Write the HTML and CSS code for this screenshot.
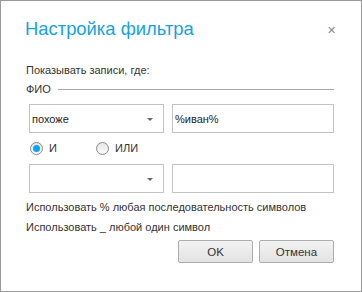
FILE: index.html
```html
<!DOCTYPE html>
<html lang="ru">
<head>
  <meta charset="UTF-8" />
  <title>Настройка фильтра</title>
  <link rel="stylesheet" href="styles.css">
</head>
<body>
  <div class="dialog">
    <div class="dialog-head">
      <h1 class="dialog-title">Настройка фильтра</h1>
      <span class="close">&#x2715;</span>
    </div>

    <div class="hint">Показывать записи, где:</div>

    <div class="group-title">
      <span>ФИО</span>
      <span class="rule"></span>
    </div>

    <div class="row">
      <div class="combo"><span>похоже</span><i class="arrow"></i></div>
      <div class="edit">%иван%</div>
    </div>

    <div class="radios">
      <label class="radio checked"><span class="dot"></span>И</label>
      <label class="radio"><span class="dot"></span>ИЛИ</label>
    </div>

    <div class="row">
      <div class="combo"><span></span><i class="arrow"></i></div>
      <div class="edit"></div>
    </div>

    <div class="note">Использовать % любая последовательность символов</div>
    <div class="note">Использовать _ любой один символ</div>

    <div class="buttons">
      <button class="btn">OK</button>
      <button class="btn">Отмена</button>
    </div>
  </div>
</body>
</html>
```

FILE: styles.css
```css
* {
  box-sizing: border-box;
}

html, body {
  margin: 0;
  padding: 0;
  background: #fff;
}

/* окно диалога */
.dialog {
  width: 362px;
  height: 292px;
  border: 1px solid #9a9a9a;
  background: #fff;
  padding: 0 27px 0 25px;
  font-family: "Liberation Sans", Arial, sans-serif;
  font-size: 11px;
  color: #333;
  display: flex;
  flex-direction: column;
}

.dialog-head {
  display: flex;
  justify-content: space-between;
  align-items: center;
  height: 58px;
  padding-bottom: 2px;
}

.dialog-title {
  margin: 0;
  font-weight: normal;
  font-size: 18.4px;
  color: #16a2e4;
  margin-left: -1px;
}

.close {
  color: #8a8a8a;
  font-size: 11px;
  margin-right: -2px;
  margin-top: 2px;
}

.hint {
  height: 14px;
  line-height: 14px;
  margin-top: 4px;
}

.group-title {
  display: flex;
  align-items: center;
  gap: 7px;
  margin-top: 5px;
  height: 14px;
}

.group-title .rule {
  flex: 1;
  border-top: 1px solid #aaa;
}

.row {
  display: flex;
  gap: 8px;
  margin-top: 8px;
  padding-left: 3px;
}

.combo, .edit {
  height: 29px;
  border: 1px solid #c3c3c3;
  display: flex;
  align-items: center;
  padding-left: 2px;
  color: #222;
}

.combo {
  width: 135px;
  justify-content: space-between;
  padding-right: 10px;
}

.edit {
  flex: 1;
}

.arrow {
  width: 0;
  height: 0;
  border-left: 3px solid transparent;
  border-right: 3px solid transparent;
  border-top: 3px solid #666;
  margin-top: 1px;
}

.radios {
  display: flex;
  margin-top: 7px;
  padding-left: 4px;
  height: 16px;
  align-items: center;
}

.radio {
  display: flex;
  align-items: center;
  gap: 6px;
  width: 66px;
}

.radio .dot {
  width: 13px;
  height: 13px;
  border-radius: 50%;
  border: 1px solid #8a8a8a;
  background: linear-gradient(#e6e6e6, #fafafa);
  display: flex;
  align-items: center;
  justify-content: center;
}

.radio.checked .dot::after {
  content: "";
  width: 7px;
  height: 7px;
  border-radius: 50%;
  background: #0aa4f2;
}

.note {
  height: 14px;
  line-height: 14px;
  margin-top: 6px;
}

.row + .note {
  margin-top: 7px;
}

.buttons {
  display: flex;
  justify-content: flex-end;
  gap: 6px;
  margin-top: 6px;
}

.btn {
  width: 75px;
  height: 23px;
  border: 1px solid #adadad;
  border-radius: 2px;
  background: linear-gradient(#f2f2f2, #e3e3e3);
  font-family: inherit;
  font-size: 11.5px;
  color: #333;
  padding: 0;
}
```
